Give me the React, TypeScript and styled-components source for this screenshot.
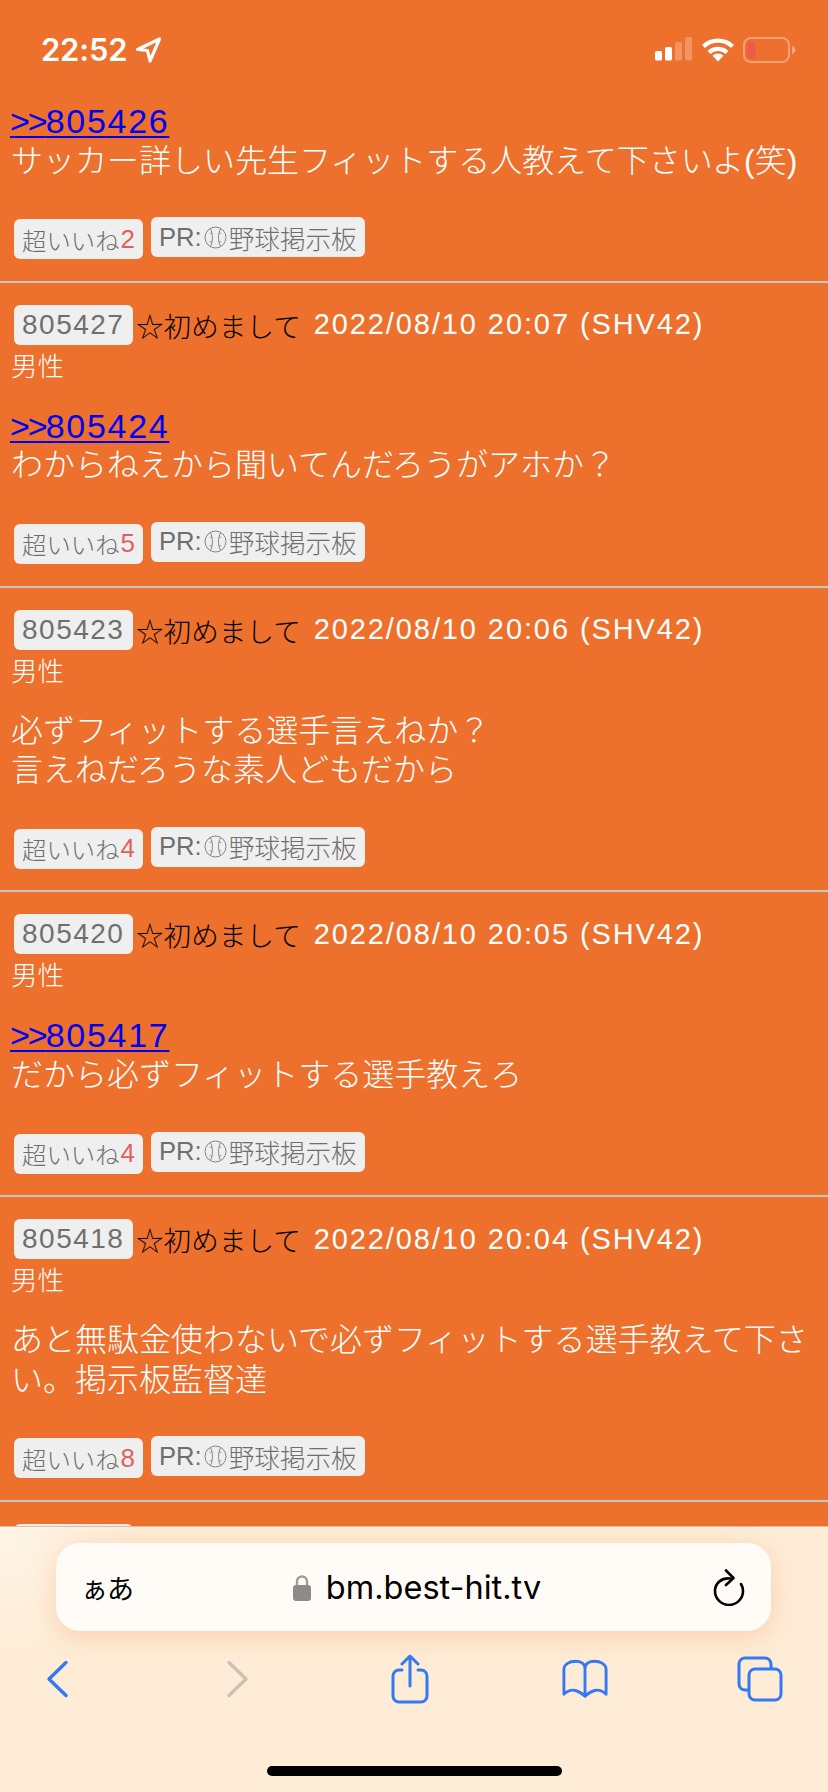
import React, {FC} from 'react';
import styled, {createGlobalStyle} from 'styled-components';

const GlobalStyle = createGlobalStyle`
  html, body {
    margin: 0;
    padding: 0;
    background: #ED702D;
  }
  body {
    font-family: "Liberation Sans", "Noto Sans CJK JP", sans-serif;
  }
`

const Page = styled.div`
  position: relative;
  width: 828px;
  height: 1792px;
  overflow: hidden;
  background: #ED702D;
  color: #fff;
`

const StatusBar = styled.div`
  height: 82px;
  box-sizing: border-box;
  padding: 37px 32px 0 41px;
  display: flex;
  align-items: flex-start;
  justify-content: space-between;
`

const StatusLeft = styled.div`
  display: flex;
  align-items: center;
  gap: 8px;
  height: 25px;
`

const Clock = styled.span`
  font-family: Inter, sans-serif;
  font-weight: 600;
  font-size: 31px;
  letter-spacing: -0.2px;
`

const StatusRight = styled.div`
  display: flex;
  align-items: flex-start;
  gap: 8px;
`

const Post = styled.article<{$first?: boolean}>`
  padding: ${p => (p.$first ? '0' : '22px')} 0 21.6px;
  border-bottom: 2px solid #c9c5c2;
  &:last-child {
    border-bottom: 0;
  }
`

const PostHead = styled.div`
  display: flex;
  align-items: center;
  height: 40px;
  padding-left: 14px;
`

const Chip = styled.span`
  display: inline-flex;
  align-items: center;
  height: 40px;
  box-sizing: border-box;
  padding: 0 8px;
  background: #efefef;
  border-radius: 6px;
  color: #6f6f6f;
  white-space: nowrap;
`

const NumberChip = styled(Chip)`
  font-size: 28px;
  letter-spacing: 1.5px;
  min-width: 119px;
`

const Name = styled.span`
  margin-left: 3px;
  font-size: 27.6px;
  font-weight: 300;
  color: #000;
`

const Stamp = styled.span`
  margin-left: 13px;
  font-size: 29px;
  letter-spacing: 1.9px;
  color: #fff;
`

const Gender = styled.div`
  margin-top: 2px;
  padding-left: 11px;
  font-size: 26.5px;
  font-weight: 300;
  line-height: 40px;
`

const Body = styled.div`
  margin-top: 20px;
  min-height: 79px;
  padding: 0 11px;
  font-size: 32px;
  font-weight: 300;
  line-height: 39.6px;
`

const ReplyLink = styled.a`
  display: block;
  margin-left: -1px;
  color: #0000ee;
  font-size: 34px;
  font-weight: 400;
  letter-spacing: 1.7px;
  text-decoration: underline;
  text-decoration-thickness: 2px;
  text-underline-offset: 3px;
`

const Arrows = styled.span`
  letter-spacing: -2px;
`

const PostFoot = styled.div`
  display: flex;
  align-items: flex-start;
  gap: 8px;
  margin-top: 36px;
  padding-left: 14px;
`

const LikeChip = styled(Chip)`
  margin-top: 2px;
  font-size: 24.4px;
  font-weight: 300;
`

const LikeCount = styled.span`
  margin-left: 1px;
  font-weight: 400;
  color: #e35f5f;
  font-size: 26px;
`

const PrChip = styled(Chip)`
  font-size: 25.6px;
  font-weight: 300;
  gap: 2px;
`

const Toolbar = styled.div`
  position: absolute;
  left: 0;
  right: 0;
  bottom: 0;
  height: 266px;
  box-sizing: border-box;
  padding-top: 16px;
  display: flex;
  flex-direction: column;
  background: radial-gradient(circle at 0 0, #fff5e8 0, #feecd6 130px);
  border-top: 1px solid #d9bfa8;
  color: #000;
`

const AddressBar = styled.div`
  display: flex;
  align-items: center;
  height: 88px;
  margin: 0 57px 0 56px;
  padding: 0 26px 0 25px;
  border-radius: 24px;
  background: #fffbf6;
  box-shadow: 0 6px 26px rgba(237, 112, 45, 0.22);
`

const TextSize = styled.span`
  width: 60px;
  font-size: 27px;
  letter-spacing: -1px;
`

const Domain = styled.div`
  flex: 1;
  display: flex;
  align-items: center;
  justify-content: center;
  gap: 15px;
  padding-right: 20px;
  font-family: Inter, sans-serif;
  font-size: 32.5px;
`

const NavRow = styled.nav`
  display: flex;
  justify-content: space-between;
  align-items: center;
  height: 48px;
  margin-top: 24px;
  padding: 0 45px 0 37px;
`

const NavItem = styled.div`
  width: 46px;
  display: flex;
  justify-content: center;
`

const HomeBar = styled.div`
  width: 295px;
  height: 10px;
  margin: auto auto 16px;
  border-radius: 5px;
  background: #000;
`

const blue = '#3478f6'

const Ball: FC = () => (
    <svg width="23" height="23" viewBox="0 0 23 23" fill="none" stroke="#777" strokeWidth=".9">
        <circle cx="11.5" cy="11.5" r="10.5"/>
        <path d="M6.500 2.500c2.600 5.600 2.600 12.400 0 18M16.500 2.500c-2.600 5.600-2.600 12.400 0 18"/>
        <path d="M5.500 7.500l2.500-.6M5.500 15.500l2.500 .6M17.500 7.500l-2.500-.6M17.500 15.500l-2.500 .6" strokeWidth=".6"/>
    </svg>
)

const LocationArrow: FC = () => (
    <svg width="27" height="26" viewBox="0 0 27 26" fill="none" stroke="#fff" strokeWidth="3.2" strokeLinejoin="round">
        <path d="M2.5 12.5L24.5 2L15 24L12.5 13.5Z"/>
    </svg>
)

const SignalBars: FC = () => (
    <svg width="38" height="24" viewBox="0 0 38 24" fill="#fff">
        <rect x="0" y="14" width="7" height="9.500" rx="1.500"/>
        <rect x="10" y="10" width="7" height="13.500" rx="1.500"/>
        <rect x="20" y="5" width="7" height="18.500" rx="1.500" opacity=".25"/>
        <rect x="30" y="0" width="7" height="23.500" rx="1.500" opacity=".25"/>
    </svg>
)

const WifiIcon: FC = () => (
    <svg width="34" height="25" viewBox="0 0 34 25">
        <path d="M2.500 9.500a21 21 0 0 1 29 0M8 15.500a13 13 0 0 1 18 0" fill="none" stroke="#fff" strokeWidth="4.200"/>
        <path d="M11.500 18.800a8 8 0 0 1 11 0L17 24.500Z" fill="#fff"/>
    </svg>
)

const BatteryIcon: FC = () => (
    <svg width="53" height="26" viewBox="0 0 53 26">
        <rect x="1" y="1" width="45" height="24" rx="7" fill="none" stroke="#fff" strokeOpacity=".35" strokeWidth="2"/>
        <rect x="4.500" y="4.500" width="8" height="17" rx="3" fill="#ef5b4b"/>
        <path d="M49 9c2 .8 3.500 2.200 3.500 4s-1.500 3.200-3.500 4z" fill="#fff" fillOpacity=".4"/>
    </svg>
)

const LockIcon: FC = () => (
    <svg width="18" height="27" viewBox="0 0 18 27">
        <path d="M4 12V7.500a5 5 0 0 1 10 0V12" fill="none" stroke="#a09e9c" strokeWidth="2.400"/>
        <rect x="0" y="11" width="18" height="16" rx="3" fill="#8e8c8b"/>
    </svg>
)

const ReloadIcon: FC = () => (
    <svg width="32" height="37" viewBox="0 0 32 37" fill="none" stroke="#000" strokeWidth="2.600" strokeLinecap="round" strokeLinejoin="round">
        <path d="M17 9.500C9 8.500 2 14 2 22a14 14 0 0 0 28 0c0-3-1-5.500-2-7"/>
        <path d="M13 1.500L20.500 9L13 16"/>
    </svg>
)

const BackIcon: FC<{color: string}> = ({color}) => (
    <svg width="24" height="40" viewBox="0 0 24 40" fill="none" stroke={color} strokeWidth="3.400" strokeLinecap="round" strokeLinejoin="round" style={{marginLeft: -7}}>
        <path d="M21 3L4 20l17 17" transform="matrix(1 0 0 .97 0 .6)"/>
    </svg>
)

const ForwardIcon: FC<{color: string}> = ({color}) => (
    <svg width="24" height="40" viewBox="0 0 24 40" fill="none" stroke={color} strokeWidth="3.400" strokeLinecap="round" strokeLinejoin="round" style={{marginLeft: 6}}>
        <path d="M3 3l17 17L3 37" transform="matrix(1 0 0 .97 0 .6)"/>
    </svg>
)

const ShareIcon: FC<{color: string}> = ({color}) => (
    <svg width="38" height="50" viewBox="0 0 38 50" fill="none" stroke={color} strokeWidth="3" strokeLinecap="round" strokeLinejoin="round">
        <path d="M11 16H8a6 6 0 0 0-6 6v20a6 6 0 0 0 6 6h22a6 6 0 0 0 6-6V22a6 6 0 0 0-6-6h-3"/>
        <path d="M19 32V2M11 10l8-8 8 8"/>
    </svg>
)

const BookIcon: FC<{color: string}> = ({color}) => (
    <svg width="48" height="40" viewBox="0 0 48 40" fill="none" stroke={color} strokeWidth="3" strokeLinecap="round" strokeLinejoin="round">
        <path d="M24 9c0-4.500-4-7.500-10-7.500S2 4.500 2 10v26c4-4 8-5 12-4s7 3 10 6c3-3 6-5 10-6s8 0 12 4V10c0-5.500-6-8.500-12-8.500S24 4.500 24 9zv28"/>
    </svg>
)

const TabsIcon: FC<{color: string}> = ({color}) => (
    <svg width="46" height="46" viewBox="0 0 46 46" fill="none" stroke={color} strokeWidth="3" strokeLinecap="round" strokeLinejoin="round">
        <path d="M11 34H8a6 6 0 0 1-6-6V8a6 6 0 0 1 6-6h20a6 6 0 0 1 6 6v4"/>
        <rect x="12" y="13" width="32" height="31" rx="6"/>
    </svg>
)

interface PostData {
    no?: string
    date?: string
    reply?: string
    text: string
    likes: number
}

const posts: PostData[] = [
    {reply: '805426', text: 'サッカー詳しい先生フィットする人教えて下さいよ(笑)', likes: 2},
    {no: '805427', date: '2022/08/10 20:07 (SHV42)', reply: '805424', text: 'わからねえから聞いてんだろうがアホか？', likes: 5},
    {no: '805423', date: '2022/08/10 20:06 (SHV42)', text: '必ずフィットする選手言えねか？\n言えねだろうな素人どもだから', likes: 4},
    {no: '805420', date: '2022/08/10 20:05 (SHV42)', reply: '805417', text: 'だから必ずフィットする選手教えろ', likes: 4},
    {no: '805418', date: '2022/08/10 20:04 (SHV42)', text: 'あと無駄金使わないで必ずフィットする選手教えて下さい。掲示板監督達', likes: 8},
]

const App: FC = () => {
    return (
        <Page>
            <GlobalStyle/>
            <StatusBar>
                <StatusLeft>
                    <Clock>22:52</Clock>
                    <LocationArrow/>
                </StatusLeft>
                <StatusRight>
                    <SignalBars/>
                    <WifiIcon/>
                    <BatteryIcon/>
                </StatusRight>
            </StatusBar>
            {posts.map((post, i) => (
                <Post key={i} $first={!post.no}>
                    {post.no && (
                        <>
                            <PostHead>
                                <NumberChip>{post.no}</NumberChip>
                                <Name>☆初めまして</Name>
                                <Stamp>{post.date}</Stamp>
                            </PostHead>
                            <Gender>男性</Gender>
                        </>
                    )}
                    <Body>
                        {post.reply && <ReplyLink href="#"><Arrows>&gt;&gt;</Arrows>{post.reply}</ReplyLink>}
                        {post.text.split('\n').map((line, j) => <div key={j}>{line}</div>)}
                    </Body>
                    <PostFoot>
                        <LikeChip>超いいね<LikeCount>{post.likes}</LikeCount></LikeChip>
                        <PrChip>PR:<Ball/>野球掲示板</PrChip>
                    </PostFoot>
                </Post>
            ))}
            <Post>
                <PostHead>
                    <NumberChip/>
                </PostHead>
            </Post>
            <Toolbar>
                <AddressBar>
                    <TextSize>ぁあ</TextSize>
                    <Domain><LockIcon/>bm.best-hit.tv</Domain>
                    <ReloadIcon/>
                </AddressBar>
                <NavRow>
                    <NavItem><BackIcon color={blue}/></NavItem>
                    <NavItem><ForwardIcon color="#cdc0b5"/></NavItem>
                    <NavItem><ShareIcon color={blue}/></NavItem>
                    <NavItem><BookIcon color={blue}/></NavItem>
                    <NavItem><TabsIcon color={blue}/></NavItem>
                </NavRow>
                <HomeBar/>
            </Toolbar>
        </Page>
    );
};

export default App;
